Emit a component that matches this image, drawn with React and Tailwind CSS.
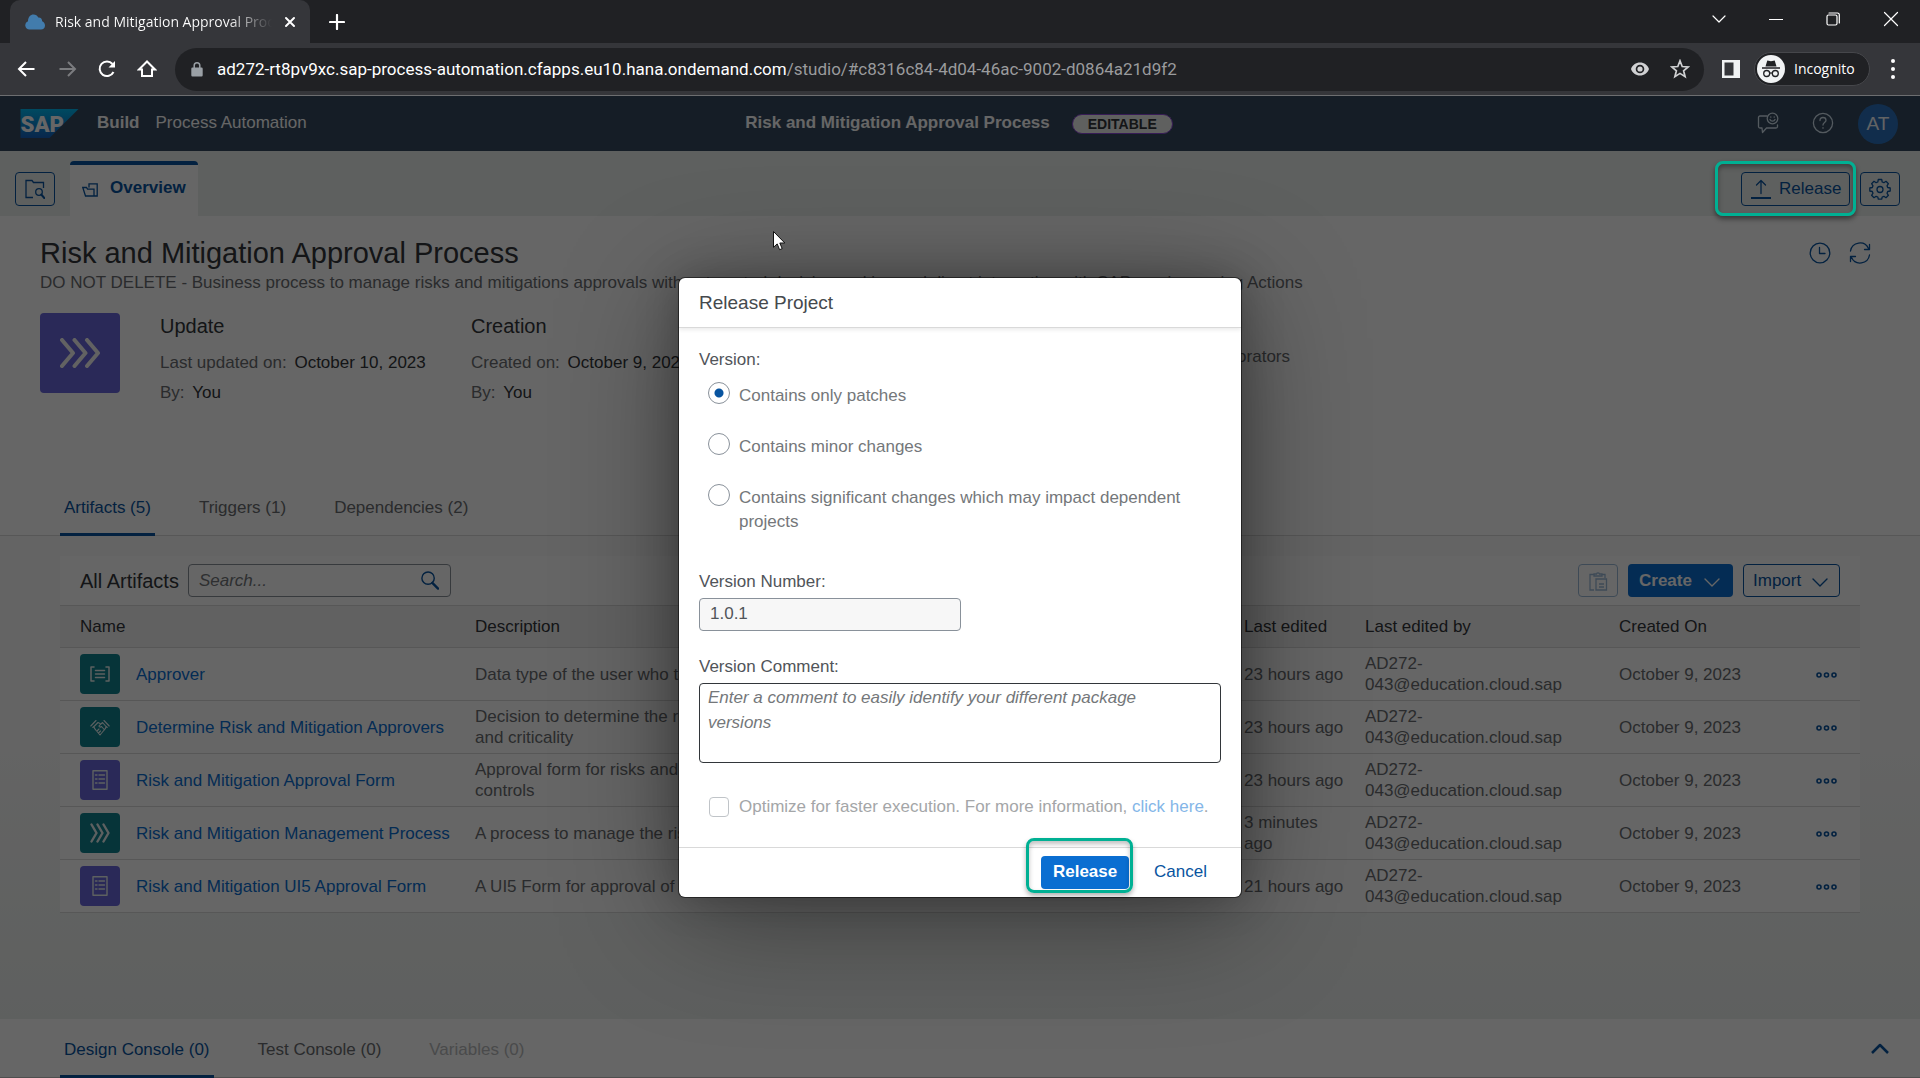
import React from "react";

const stroke = { fill: "none", stroke: "currentColor", strokeLinecap: "round", strokeLinejoin: "round" };

function Svg({ size = 20, w, h, box = "0 0 20 20", sw = 1.3, className = "", children }) {
  return (
    <svg width={w || size} height={h || size} viewBox={box} strokeWidth={sw} className={`shrink-0 ${className}`} aria-hidden="true" {...stroke}>
      {children}
    </svg>
  );
}

const Chevrons = ({ size }) => (
  <Svg size={size} sw={2.4}>
    <path d="M1.5 1.5 6.5 10l-5 8.500M7.500 1.500 12.500 10l-5 8.500M13.500 1.500 18.500 10l-5 8.500" />
  </Svg>
);
const DataTypeIcon = () => (
  <Svg sw={1.5}>
    <path d="M4 3H1v14h3M16 3h3v14h-3M5.500 6.500h9M5.500 10h9M5.500 13.500h9" />
  </Svg>
);
const DecisionIcon = () => (
  <Svg sw={1.1}>
    <path d="M.8 9 6 3.500M2.800 10.500l1-1M19.200 9 14 3.500M17.200 10.500l-1-1M10 6.500 8 5.500 4 9.500c0 1.500.8 2.500 1.800 3.500L10 18l4.200-5c1-1 1.800-2 1.800-3.500L12.500 5.500 9 8.800c0 1.500 1.500 1.700 2.500.7l2.700 3M7.500 13.500 9 12M9 15.500l1.500-1.500" />
  </Svg>
);
const FormIcon = () => (
  <Svg sw={1.4}>
    <path d="M3 .8h14v18.400H3zM5.500 5h1.500M9 5h5.500M5.500 9h1.500M9 9h5.500M5.500 13h1.500M9 13h5.500" />
  </Svg>
);
const Caret = () => (
  <Svg w={16} h={16} box="0 0 16 16" sw={1.4} className="mt-[2px]">
    <path d="m1 5 7 7 7-7" />
  </Svg>
);

function BrowserBar() {
  return (
    <header className="bg-[#202124] font-[Roboto,sans-serif] text-white">
      <div className="flex h-[43px] items-stretch">
        <div className="ml-[10px] flex w-[300px] items-center rounded-t-[10px] bg-[#35363a] pl-[15px]">
          <svg width="20" height="16" viewBox="0 0 20 16" className="shrink-0" aria-hidden="true">
            <path d="M4.500 15.500A4.300 4.300 0 0 1 3 7.200C3 3 5.500.5 8.500.5c2.300 0 3.800 1 4.800 3 2.500-.2 3.800 1.500 3.900 3.800C19 8.200 20 9.700 20 11.500c0 2.500-1.700 4-4 4z" fill="#427cac" />
          </svg>
          <span className="ml-[10px] w-[217px] overflow-hidden whitespace-nowrap bg-gradient-to-r from-white from-80% to-transparent bg-clip-text font-['Open_Sans',sans-serif] text-[14px] leading-6 text-transparent">
            Risk and Mitigation Approval Process
          </span>
          <button aria-label="Close tab" className="ml-[12px]">
            <Svg size={12} box="0 0 12 12" sw={2}><path d="m2 2 8 8M10 2l-8 8" /></Svg>
          </button>
        </div>
        <button aria-label="New tab" className="ml-[19px]">
          <Svg size={16} box="0 0 16 16" sw={2.200}><path d="M8 1v14M1 8h14" /></Svg>
        </button>
        <div className="ml-auto mr-[21px] flex h-[38px] items-center gap-[43px]">
          <button aria-label="Search tabs"><Svg size={14} box="0 0 14 14" sw={1.200}><path d="m1 4 6 6 6-6" /></Svg></button>
          <button aria-label="Minimize"><Svg size={14} box="0 0 14 14" sw={1.200}><path d="M.5 7.500h13" /></Svg></button>
          <button aria-label="Restore"><Svg size={14} box="0 0 14 14" sw={1.200}><rect x="1" y="3" width="10" height="10" rx="1.500" /><path d="M3 1h8.500A1.800 1.800 0 0 1 13.300 3v8" /></Svg></button>
          <button aria-label="Close"><Svg size={16} box="0 0 16 16" sw={1.200}><path d="m1.500 1.500 13 13M14.500 1.500l-13 13" /></Svg></button>
        </div>
      </div>
      <div className="flex h-[53px] items-center border-b border-[#6d6e70] bg-[#35363a] pl-[17px] pr-[21px]">
        <div className="flex items-center gap-5">
          <button aria-label="Back"><Svg sw={2}><path d="M17.500 10H2.500M9 3l-7 7 7 7" strokeLinecap="butt" strokeLinejoin="miter" /></Svg></button>
          <button aria-label="Forward" className="text-[#7b7c7f]"><Svg sw={2}><path d="M2.500 10h15M11 3l7 7-7 7" strokeLinecap="butt" strokeLinejoin="miter" /></Svg></button>
          <button aria-label="Reload"><Svg sw={2}><path d="M16.500 13A7.300 7.300 0 1 1 15.500 5" strokeLinecap="butt" /><path d="M18 2v6.500h-6.500z" fill="currentColor" stroke="none" /></Svg></button>
          <button aria-label="Home"><Svg sw={2}><path d="M2 10.500h3V17h10v-6.500h3L10 2.500z" strokeLinejoin="miter" /></Svg></button>
        </div>
        <div className="ml-[18px] flex h-[43px] min-w-0 flex-1 items-center rounded-full bg-[#202124] pl-[16px] pr-[14px]">
          <svg width="12" height="15" viewBox="0 0 12 15" className="shrink-0" aria-hidden="true">
            <path d="M1.500 5.500h9A1.200 1.200 0 0 1 11.700 6.700v6.600a1.200 1.200 0 0 1-1.200 1.200h-9A1.200 1.200 0 0 1 .3 13.300V6.700A1.200 1.200 0 0 1 1.500 5.500z" fill="#9aa0a6" />
            <path d="M3.200 6V3.600a2.800 2.800 0 0 1 5.600 0V6" fill="none" stroke="#9aa0a6" strokeWidth="1.500" />
          </svg>
          <span className="ml-[14px] flex-1 truncate text-[17px] leading-6">
            ad272-rt8pv9xc.sap-process-automation.cfapps.eu10.hana.ondemand.com<span className="text-[#9a9b9d]">/studio/#c8316c84-4d04-46ac-9002-d0864a21d9f2</span>
          </span>
          <div className="flex items-center gap-5 text-[#d0d1d3]">
            <svg width="20" height="20" viewBox="0 0 20 20" aria-hidden="true">
              <path fillRule="evenodd" d="M10 3.500c4.200 0 7.600 2.600 9 6.500-1.400 3.900-4.800 6.500-9 6.500S2.400 13.900 1 10c1.400-3.900 4.800-6.500 9-6.500zM10 5.700a4.300 4.300 0 1 0 0 8.600 4.300 4.300 0 0 0 0-8.600z" fill="currentColor" />
              <circle cx="10" cy="10" r="2.600" fill="currentColor" />
            </svg>
            <Svg sw={1.700}><path d="m10 1.800 2.200 5.700 6 .4-4.600 3.900 1.500 5.900L10 14.400l-5.100 3.300 1.500-5.900L1.800 7.900l6-.4z" strokeLinejoin="miter" /></Svg>
          </div>
        </div>
        <svg width="20" height="20" viewBox="0 0 20 20" className="ml-[17px] shrink-0" aria-hidden="true">
          <path fillRule="evenodd" d="M1 1h18v18H1zM3.500 3.500v13h9v-13z" fill="#f1f3f4" />
        </svg>
        <button className="ml-[13px] flex h-[34px] w-[116px] items-center rounded-full border border-[#46474b] bg-[#202124] pl-[2px]">
          <svg width="28" height="28" viewBox="0 0 28 28" className="shrink-0" aria-hidden="true">
            <circle cx="14" cy="14" r="14" fill="#f1f3f4" />
            <path d="M10.300 5.500 14 6.300l3.700-.8 1.800 6H8.500zM5 12.300h18v1.400H5z" fill="#202124" />
            <g fill="none" stroke="#202124" strokeWidth="1.300"><circle cx="9.700" cy="18.500" r="3" /><circle cx="18.300" cy="18.500" r="3" /><path d="M12.700 18.200q1.300-.8 2.600 0" /></g>
          </svg>
          <span className="ml-[9px] font-['Open_Sans',sans-serif] text-[14px] leading-6">Incognito</span>
        </button>
        <button aria-label="Menu" className="ml-[17px] flex flex-col items-center gap-1 px-1">
          <i className="size-1 rounded-full bg-white" /><i className="size-1 rounded-full bg-white" /><i className="size-1 rounded-full bg-white" />
        </button>
      </div>
    </header>
  );
}

function ShellBar() {
  return (
    <div className="grid h-[54px] grid-cols-[1fr_auto_1fr] items-center bg-[#354a5f] pl-5 pr-[22px] text-[17px] text-white">
      <div className="flex items-center">
        <svg width="59" height="29" viewBox="0 0 60 30" role="img" aria-label="SAP">
          <defs><linearGradient id="sapLogo" x1="0" y1="0" x2="0" y2="1"><stop offset="0" stopColor="#00b8f1" /><stop offset="1" stopColor="#1661be" /></linearGradient></defs>
          <path d="M0 0h60L30 30H0z" fill="url(#sapLogo)" />
          <text x="0" y="24" fontSize="23" fontWeight="900" fontFamily="Roboto, sans-serif" fill="#fff">SAP</text>
        </svg>
        <span className="ml-[18px] font-bold">Build</span>
        <span className="ml-4">Process Automation</span>
      </div>
      <div className="flex items-center">
        <h2 className="font-bold leading-6">Risk and Mitigation Approval Process</h2>
        <span className="ml-[22px] mt-[2px] flex h-5 items-center rounded-full border border-[#8b47d7] bg-[#edf0ee] px-[15px] text-[14px] font-bold leading-5 text-[#32363a]">EDITABLE</span>
      </div>
      <div className="flex items-center justify-end text-[#d1e0ee]">
        <button aria-label="Feedback"><Svg size={22} box="0 0 22 22">
          <path d="M10 4H3a1.500 1.500 0 0 0-1.500 1.500v9A1.500 1.500 0 0 0 3 16h2l.5 4.500L9.500 16H19a1.500 1.500 0 0 0 1.500-1.500V13" />
          <circle cx="15.500" cy="6.500" r="5.300" /><path d="M13 7.500a2.700 2.700 0 0 0 5 0M13.800 4.800v.4M17.200 4.800v.4" />
        </Svg></button>
        <button aria-label="Help" className="ml-[33px]"><Svg size={22} box="0 0 22 22">
          <circle cx="11" cy="11" r="9.600" /><path d="M8 8.500c0-2 1.300-3 3-3s3 1 3 2.700c0 2.300-3 2.400-3 4.800M11 15.700v.5" />
        </Svg></button>
        <button className="ml-[24px] mt-[2px] size-10 rounded-full bg-[#2b72bf] text-[19px] text-[#f5f8fb]">AT</button>
      </div>
    </div>
  );
}

function SubHeader() {
  return (
    <div className="flex h-[66px] items-stretch bg-[#ecf0ee] pl-[15px] pr-5 text-[#0854a0] shadow-[inset_0_1px_0_#354a5f]">
      <button aria-label="Browse project" className="mt-[22px] flex h-[34px] w-10 items-center justify-center rounded border border-[#0854a0]">
        <Svg><path d="M8 18.500H1V1.500h6l1.500 2h10V9" strokeLinecap="butt" strokeLinejoin="miter" /><circle cx="14" cy="13" r="3.300" /><path d="m16.300 15.500 3 3.500" strokeWidth="2" /></Svg>
      </button>
      <button className="ml-[15px] mt-[11px] flex w-[128px] items-start rounded-t border-t-4 border-[#0854a0] bg-white pl-3 pt-[11px] text-[17px] font-bold leading-6">
        <Svg size={16} box="0 0 16 16" className="mt-[6px]"><path d="M3.500 14 .8 5.500H4.500l1 1.700H12V14zM7 5V1.800h8.200V14H12" strokeLinejoin="miter" /></Svg>
        <span className="ml-3">Overview</span>
      </button>
      <div className="relative ml-auto mt-[11px] h-[55px] pl-[26px] pr-[6px] pt-[11px]">
        <button className="flex h-[34px] w-[109px] items-center rounded border border-[#0854a0] pl-[9px] text-[17px]">
          <Svg><path d="M10 14.500V1.500M5.500 6 10 1.500 14.500 6" /><path d="M0 19h20" strokeWidth="2" strokeLinecap="butt" /></Svg>
          <span className="ml-2">Release</span>
        </button>
        <span className="pointer-events-none absolute inset-0 z-20 rounded-lg border-3 border-[#00b093] shadow-[0_3px_5px_rgba(0,0,0,0.45),inset_0_3px_5px_rgba(0,0,0,0.35)]" />
      </div>
      <button aria-label="Settings" className="ml-[4px] mt-[22px] flex h-[34px] w-10 items-center justify-center rounded border border-[#0854a0]">
        <Svg size={22} box="0 0 22 22">
          <path d="M9.300 1.500h3.400l.5 2.500 1.700.7 2.100-1.400 2.400 2.400L18 7.800l.7 1.700 2.500.5v3l-2.500.5-.7 1.700 1.400 2.100-2.400 2.400-2.100-1.400-1.700.7-.5 2.200H9.300L8.800 19l-1.700-.7L5 19.700l-2.400-2.400L4 15.200l-.7-1.700-2.500-.5v-3l2.500-.5L4 7.800 2.600 5.700 5 3.300l2.100 1.400L8.800 4z" />
          <circle cx="11" cy="11.500" r="3" />
        </Svg>
      </button>
    </div>
  );
}

function Fact({ label, value }) {
  return <p><span className="text-[#6a6d70]">{label}</span> <span className="ml-[3px] text-[#32363a]">{value}</span></p>;
}

function ProjectHeader() {
  return (
    <section className="border-b border-[#d9d9d9] bg-white">
      <div className="flex items-start justify-between pl-10 pr-[49px] pt-[19px]">
        <div className="leading-6">
          <h1 className="text-[29px] leading-[36px] text-[#32363a]">Risk and Mitigation Approval Process</h1>
          <p className="text-[17px] text-[#6a6d70]">
            DO NOT DELETE - Business process to manage risks and mitigations approvals with automated decision making and direct integration with SAP services using Actions
          </p>
        </div>
        <div className="mt-[7px] flex gap-[18px] text-[#0854a0]">
          <button aria-label="History"><Svg size={22} box="0 0 22 22"><circle cx="11" cy="11" r="9.800" /><path d="M10.500 5.500v6H16" /></Svg></button>
          <button aria-label="Refresh"><Svg size={22} box="0 0 22 22"><path d="M1.500 9a9.500 9.500 0 0 1 18-2.500M20.500 2.500v5h-5M20.500 13a9.500 9.500 0 0 1-18 2.500M1.500 19.500v-5h5" /></Svg></button>
        </div>
      </div>
      <div className="mt-[18px] flex pl-10">
        <div className="flex size-20 items-center justify-center rounded bg-[#6966dc] text-[#f4f4f4]">
          <svg width="40" height="30" viewBox="0 0 40 30" fill="none" stroke="currentColor" strokeWidth="4" strokeLinecap="round" strokeLinejoin="round" aria-hidden="true">
            <path d="m2 2 11 13L2 28M14.500 2l11 13-11 13M27 2l11 13-11 13" />
          </svg>
        </div>
        <div className="ml-10 grid flex-1 grid-cols-[311px_613px_1fr] text-[17px] leading-6">
          <div>
            <h3 className="mb-[13px] mt-[1px] text-[20px] text-[#32363a]">Update</h3>
            <Fact label="Last updated on:" value="October 10, 2023" />
            <div className="mt-[6px]"><Fact label="By:" value="You" /></div>
          </div>
          <div>
            <h3 className="mb-[13px] mt-[1px] text-[20px] text-[#32363a]">Creation</h3>
            <Fact label="Created on:" value="October 9, 2023" />
            <div className="mt-[6px]"><Fact label="By:" value="You" /></div>
          </div>
          <p className="pt-8 text-[#6a6d70]">Shared with 0 collaborators</p>
        </div>
      </div>
      <nav className="mt-[91px] flex gap-10 pl-[60px] text-[17px] leading-6">
        <button className="-mb-px rounded-t-sm border-b-3 border-[#0854a0] px-1 pb-[13px] text-[#0854a0]">Artifacts (5)</button>
        <button className="px-1 pb-[15px] text-[#6a6d70]">Triggers (1)</button>
        <button className="px-1 pb-[15px] text-[#6a6d70]">Dependencies (2)</button>
      </nav>
    </section>
  );
}

const ROWS = [
  { icon: <DataTypeIcon />, tone: "bg-[#0f828f]", name: "Approver", desc: "Data type of the user who takes the decision", edited: "23 hours ago" },
  { icon: <DecisionIcon />, tone: "bg-[#0f828f]", name: "Determine Risk and Mitigation Approvers", desc: "Decision to determine the risk approvers by impact and criticality", edited: "23 hours ago" },
  { icon: <FormIcon />, tone: "bg-[#6966dc]", name: "Risk and Mitigation Approval Form", desc: "Approval form for risks and related mitigation controls", edited: "23 hours ago" },
  { icon: <Chevrons size={20} />, tone: "bg-[#0f828f]", name: "Risk and Mitigation Management Process", desc: "A process to manage the risks", edited: "3 minutes ago" },
  { icon: <FormIcon />, tone: "bg-[#6966dc]", name: "Risk and Mitigation UI5 Approval Form", desc: "A UI5 Form for approval of risks", edited: "21 hours ago" },
];

function Artifacts() {
  return (
    <main className="flex-1 bg-gradient-to-b from-[#fafafa] from-40% to-[#ecf0ee] px-[60px] pt-5">
      <div className="bg-white text-[17px] leading-6">
        <div className="flex items-center pb-2 pl-5 pr-5 pt-2">
          <h2 className="text-[20px] text-[#32363a]">All Artifacts</h2>
          <label className="ml-[9px] flex h-[33px] w-[263px] items-center rounded-sm border border-[#89919a] bg-white pl-[10px] pr-[11px]">
            <input aria-label="Search artifacts" placeholder="Search..." className="min-w-0 flex-1 bg-transparent italic outline-none placeholder:text-[#74777a]" />
            <Svg size={19} className="text-[#0854a0]" sw={1.500}><circle cx="8.500" cy="7.500" r="6.500" /><path d="m13 12.500 6 6" strokeWidth="2.500" /></Svg>
          </label>
          <button aria-label="Paste" disabled className="ml-auto flex h-[33px] w-10 items-center justify-center rounded border border-[#0854a0] text-[#0854a0] opacity-40">
            <Svg><path d="M6 3.500H2v15.500h4M14 3.500h3V7M6 5V3h2.500a1.600 1.600 0 0 1 3 0H14v2zM8 8h10.500v11H8zM11 13h5M11 16h5" strokeLinecap="butt" strokeLinejoin="miter" /></Svg>
          </button>
          <button className="ml-[10px] flex h-[33px] w-[105px] items-center justify-between rounded bg-[#0a6ed1] pl-[11px] pr-[13px] font-bold text-white">Create<Caret /></button>
          <button className="ml-[10px] flex h-[33px] w-[97px] items-center justify-between rounded border border-[#0854a0] pl-[9px] pr-[11px] text-[#0854a0]">Import<Caret /></button>
        </div>
        <table className="w-full table-fixed border-collapse text-left">
          <colgroup><col className="w-[399px]" /><col /><col className="w-[121px]" /><col className="w-[254px]" /><col className="w-[170px]" /><col className="w-[87px]" /></colgroup>
          <thead>
            <tr className="h-[42px] border-y border-[#d9d9d9] bg-[#f2f2f2] text-[#32363a]">
              <th className="pl-5 font-normal">Name</th>
              <th className="pl-4 font-normal">Description</th>
              <th className="pl-4 font-normal">Last edited</th>
              <th className="pl-4 font-normal">Last edited by</th>
              <th className="pl-4 font-normal">Created On</th>
              <th aria-label="Actions" />
            </tr>
          </thead>
          <tbody className="leading-[21px] text-[#6a6d70]">
            {ROWS.map((r) => (
              <tr key={r.name} className="h-[53px] border-b border-[#d9d9d9]">
                <td className="pl-5">
                  <div className="flex items-center gap-4">
                    <span className={`flex size-10 shrink-0 items-center justify-center rounded text-[#e8f1f1] ${r.tone}`}>{r.icon}</span>
                    <a href="#artifact" className="whitespace-nowrap text-[#0a6ed1]">{r.name}</a>
                  </div>
                </td>
                <td className="pl-4"><p className="max-w-[390px]">{r.desc}</p></td>
                <td className="pl-4">{r.edited}</td>
                <td className="pl-4">AD272-<wbr />043@education.cloud.sap</td>
                <td className="pl-4">October 9, 2023</td>
                <td className="pr-[23px] text-right">
                  <button aria-label="More actions" className="align-middle text-[#0854a0]">
                    <svg width="22" height="8" viewBox="0 0 22 8" fill="none" stroke="currentColor" strokeWidth="1.600" aria-hidden="true"><circle cx="4" cy="4" r="2" /><circle cx="11.500" cy="4" r="2" /><circle cx="19" cy="4" r="2" /></svg>
                  </button>
                </td>
              </tr>
            ))}
          </tbody>
        </table>
      </div>
    </main>
  );
}

function ConsoleBar() {
  return (
    <footer className="flex items-center border-b border-[#c4c4c4] bg-white pl-[60px] pr-[30px] text-[17px] leading-6">
      <button className="-mb-px rounded-t-sm border-b-3 border-[#0854a0] px-1 pb-[13px] pt-[19px] text-[#0854a0]">Design Console (0)</button>
      <button className="ml-10 px-1 pb-[13px] pt-4 text-[#6a6d70]">Test Console (0)</button>
      <button disabled className="ml-10 px-1 pb-[13px] pt-4 text-[#b8babb]">Variables (0)</button>
      <button aria-label="Expand console" className="ml-auto text-[#0854a0]">
        <Svg size={20} sw={2.500}><path d="m2 15 8-8 8 8" strokeLinecap="butt" /></Svg>
      </button>
    </footer>
  );
}

const OPTIONS = ["Contains only patches", "Contains minor changes", "Contains significant changes which may impact dependent projects"];

function ReleaseDialog() {
  return (
    <div role="dialog" aria-labelledby="dialog-title" className="flex w-[562px] flex-col rounded-md bg-white text-[17px] leading-6 text-[#51555a] shadow-[0_0_0_1px_rgba(0,0,0,0.5),0_0_40px_rgba(0,0,0,0.25),0_20px_120px_rgba(0,0,0,0.4)]">
      <h2 id="dialog-title" className="border-b border-[#d9d9d9] px-5 pb-3 pt-[13px] text-[19px] text-[#45494d] shadow-[0_2px_4px_rgba(0,0,0,0.08)]">Release Project</h2>
      <div className="px-5 pb-7 pt-5">
        <fieldset>
          <legend>Version:</legend>
          <div className="mt-3 flex flex-col gap-[27px] pl-[9px] text-[#74777a]">
            {OPTIONS.map((o, i) => (
              <label key={o} className="flex items-start">
                <input type="radio" name="version" defaultChecked={i === 0} className="-mt-[2px] size-[22px] shrink-0 appearance-none rounded-full border border-[#89919a] bg-white checked:bg-[radial-gradient(circle,#0854a0_4px,white_5px)]" />
                <span className="ml-[9px]">{o}</span>
              </label>
            ))}
          </div>
        </fieldset>
        <label htmlFor="number" className="mt-9 block">Version Number:</label>
        <input id="number" readOnly defaultValue="1.0.1" className="mt-1 block h-[33px] w-[262px] rounded-sm border border-[#89919a] bg-[#f7f7f7] px-[10px]" />
        <label htmlFor="comment" className="mt-6 block">Version Comment:</label>
        <textarea id="comment" placeholder="Enter a comment to easily identify your different package versions" className="mt-1 block h-20 w-full resize-none rounded-sm border border-[#32363a] py-px pl-2 pr-6 leading-[25px] outline-none placeholder:italic placeholder:text-[#74777a]" />
        <div className="mt-8 flex items-center pl-[10px] text-[#a4a6a8]">
          <input id="optimize" type="checkbox" disabled className="size-5 shrink-0 appearance-none rounded-sm border border-[#c0c4c8] bg-white" />
          <label htmlFor="optimize" className="ml-[10px] whitespace-nowrap">Optimize for faster execution. For more information, <a href="#help" className="text-[#84b6e8]">click here</a>.</label>
        </div>
      </div>
      <div className="flex justify-end border-t border-[#d9d9d9] pb-2 pr-[18px] pt-2">
        <div className="relative">
          <button className="h-[33px] w-[88px] rounded bg-[#0a6ed1] font-bold text-white">Release</button>
          <span className="pointer-events-none absolute -bottom-1 -left-[15px] -right-[4px] -top-[18px] rounded-lg border-3 border-[#00b093] shadow-[0_3px_5px_rgba(0,0,0,0.3),inset_0_3px_5px_rgba(0,0,0,0.25)]" />
        </div>
        <button className="ml-[9px] h-[33px] px-4 text-[#0854a0]">Cancel</button>
      </div>
    </div>
  );
}

export default function App() {
  return (
    <div className="flex min-h-screen flex-col font-['Liberation_Sans',sans-serif]">
      <BrowserBar />
      <div className="relative flex flex-1 flex-col">
        <ShellBar />
        <SubHeader />
        <ProjectHeader />
        <Artifacts />
        <ConsoleBar />
        <div className="absolute inset-0 z-10 flex items-center justify-center overflow-hidden bg-black/60">
          <ReleaseDialog />
        </div>
        <svg width="13" height="20" viewBox="0 0 13 20" className="absolute left-[773px] top-[135px] z-20" aria-hidden="true">
          <path d="M.5.500v15.800l3.700-3.400 2.400 5.800 2.600-1.100-2.400-5.600h5z" fill="#fff" stroke="#111" />
        </svg>
      </div>
    </div>
  );
}
